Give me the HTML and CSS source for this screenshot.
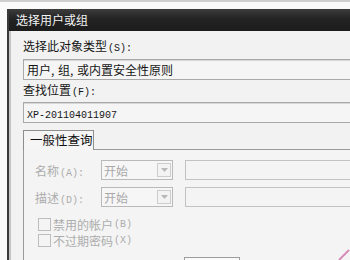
FILE: index.html
```html
<!DOCTYPE html>
<html lang="zh-CN">
<head>
<meta charset="utf-8">
<title>选择用户或组</title>
<link rel="stylesheet" href="styles.css">
</head>
<body>
<div class="screen">
  <div class="window">
    <div class="titlebar">选择用户或组</div>
    <div class="body">
      <div class="label">选择此对象类型<span class="key">(S):</span></div>
      <div class="field">用户<span class="comma">,</span> 组<span class="comma">,</span> 或内置安全性原则</div>
      <div class="label label2">查找位置<span class="key">(F):</span></div>
      <div class="field field2"><span class="mono">XP-201104011907</span></div>
      <div class="tabs"><div class="tab">一般性查询</div></div>
      <div class="panel">
        <div class="row">
          <div class="dlabel">名称<span class="key">(A):</span></div>
          <div class="combo"><span class="ctext">开始</span><span class="arrow"><svg width="7" height="4" viewBox="0 0 7 4"><path d="M0 0h7L3.5 4z" fill="#b8b8b8"/></svg></span></div>
          <div class="tfield"></div>
        </div>
        <div class="row row2">
          <div class="dlabel">描述<span class="key">(D):</span></div>
          <div class="combo"><span class="ctext">开始</span><span class="arrow"><svg width="7" height="4" viewBox="0 0 7 4"><path d="M0 0h7L3.5 4z" fill="#b8b8b8"/></svg></span></div>
          <div class="tfield"></div>
        </div>
        <div class="checks">
          <div class="check"><span class="box"></span>禁用的帐户<span class="key">(B)</span></div>
          <div class="check"><span class="box"></span>不过期密码<span class="key">(X)</span></div>
        </div>
        <div class="row last">
          <div class="faint">自上次登录后的天数(I):</div>
          <div class="smallcombo"></div>
        </div>
      </div>
    </div>
  </div>
  <svg class="pen" width="12" height="12" viewBox="0 0 12 12"><path d="M1 12L11 2" stroke="#d58cb8" stroke-width="2"/></svg>
</div>
</body>
</html>
```
FILE: styles.css
```css
html, body {
  margin: 0;
  padding: 0;
}
body {
  background: #fbfbfb;
  font-family: "Noto Sans CJK SC", "Noto Sans", sans-serif;
  font-size: 12px;
  color: #1a1a1a;
}
.screen {
  position: relative;
  width: 350px;
  height: 260px;
  overflow: hidden;
  box-sizing: border-box;
  border-top: 2px solid #cfcfcf;
  padding-top: 7px;
  background: #fafafa;
}
.window {
  margin-left: 7px;
  border-left: 2px solid #3a3a3a;
  height: 260px;
}
.titlebar {
  height: 22px;
  line-height: 21px;
  padding-left: 7px;
  color: #f4f4f4;
  font-size: 12px;
  background: linear-gradient(#3c3c3c, #232323 45%, #1c1c1c);
}
.body {
  background: #f2f2f2;
  padding: 8px 0 0 14px;
  height: 240px;
  box-shadow: inset 2px 0 0 #c4c4c4;
}
.label {
  height: 14px;
  line-height: 14px;
  color: #151515;
}
.key {
  font-family: "Liberation Mono", monospace;
  font-size: 10px;
  margin-left: 1px;
}
.label2 {
  margin-top: 3px;
}
.field {
  margin-top: 6px;
  height: 19px;
  line-height: 19px;
  border: 1px solid #a9a9a9;
  border-right: none;
  background: #f5f5f5;
  padding-left: 3px;
  color: #151515;
  box-shadow: inset 0 1px 0 #d6d6d6;
}
.comma {
  margin-right: 1px;
}
.field2 {
  margin-top: 5px;
}
.mono {
  font-family: "Liberation Mono", monospace;
  font-size: 10px;
}
.tabs {
  margin-top: 7px;
  display: flex;
  position: relative;
  z-index: 1;
}
.tab {
  width: 63px;
  height: 19px;
  line-height: 18px;
  padding-left: 6px;
  border: 1px solid #8e8e8e;
  border-bottom: none;
  background: #f5f5f5;
  font-size: 12.5px;
  color: #111;
  margin-bottom: -1px;
}
.panel {
  border-top: 1px solid #9a9a9a;
  border-left: 1px solid #9a9a9a;
  background: #f4f4f4;
  padding: 10px 0 0 11px;
  height: 120px;
}
.row {
  display: flex;
  align-items: center;
  height: 20px;
}
.row > * {
  flex: none;
}
.row2 {
  margin-top: 7px;
}
.dlabel {
  width: 66px;
  color: #acacac;
}
.combo {
  width: 70px;
  height: 18px;
  border: 1px solid #b9b9b9;
  background: #f6f6f6;
  display: flex;
  align-items: center;
  justify-content: space-between;
}
.ctext {
  padding-left: 2px;
  color: #a8a8a8;
}
.arrow {
  width: 12px;
  height: 12px;
  margin-right: 1px;
  border: 1px solid #cdcdcd;
  display: flex;
  align-items: center;
  justify-content: center;
  background: #f3f3f3;
}
.tfield {
  margin-left: 12px;
  width: 200px;
  height: 18px;
  border: 1px solid #c2c2c2;
  background: #f4f4f4;
}
.checks {
  margin-top: 9px;
  padding-left: 3px;
}
.check {
  display: flex;
  align-items: center;
  height: 16px;
  color: #acacac;
}
.box {
  width: 11px;
  height: 11px;
  border: 1px solid #bdbdbd;
  margin-right: 2px;
}
.last {
  margin-top: 9px;
}
.faint {
  width: 146px;
  padding-left: 3px;
  color: #d0d0d0;
}
.smallcombo {
  width: 54px;
  height: 18px;
  border: 1px solid #9d9d9d;
  background: #fafafa;
}
.pen {
  position: absolute;
  right: 0;
  bottom: 0;
}
```
